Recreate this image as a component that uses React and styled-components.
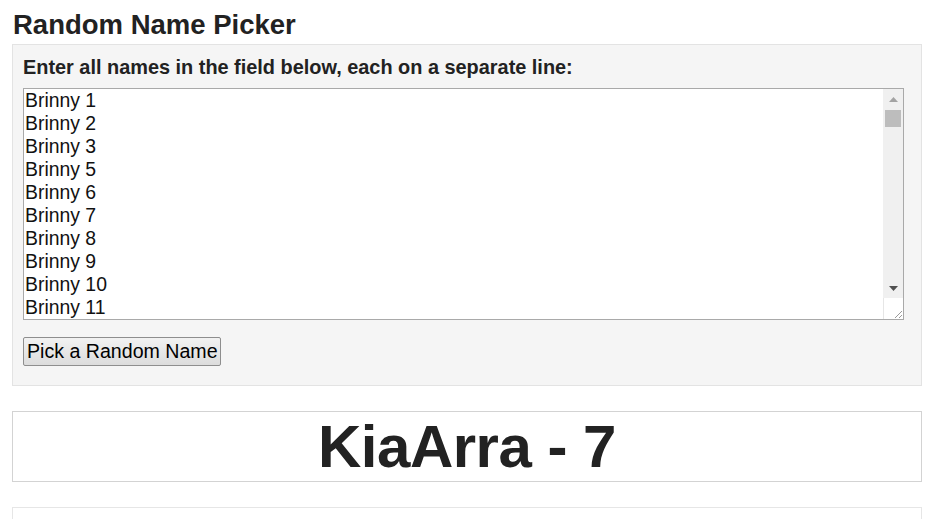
import React, { Component } from 'react';
import styled, { createGlobalStyle } from 'styled-components';

const GlobalStyle = createGlobalStyle`
  html, body {
    margin: 0;
    padding: 0;
    background: #fff;
  }
  body {
    font-family: 'Liberation Sans', Arial, sans-serif;
    color: #222;
  }
`;

const Page = styled.div`
  padding: 10px 4px 0 12px;
`;

const Heading = styled.h1`
  font-size: 27.5px;
  font-weight: bold;
  line-height: 30px;
  margin: 0 0 4px 1px;
  color: #222;
`;

const Panel = styled.div`
  background: #f5f5f5;
  border: 1px solid #e3e3e3;
  padding: 10px 10px 19px;
`;

const Label = styled.label`
  display: block;
  font-size: 19.9px;
  font-weight: bold;
  line-height: 22px;
  margin: 1px 0 10px;
  color: #222;
`;

const Field = styled.div`
  position: relative;
  width: 881px;
  height: 232px;
`;

const Names = styled.textarea`
  display: block;
  box-sizing: border-box;
  width: 100%;
  height: 100%;
  margin: 0;
  padding: 0 0 0 1px;
  border: 1px solid #a9a9a9;
  font-family: 'Liberation Sans', Arial, sans-serif;
  font-size: 19.4px;
  line-height: 23px;
  color: #111;
  background: #fff;
  resize: none;
  overflow-y: scroll;
  outline: none;
`;

/* drawn scrollbar, sits over the right edge of the textarea */
const ScrollBar = styled.div`
  position: absolute;
  top: 1px;
  right: 1px;
  bottom: 1px;
  width: 20px;
  display: flex;
  flex-direction: column;
  pointer-events: none;
`;

const Track = styled.div`
  flex: 1;
  background: #f0f0f0;
  display: flex;
  flex-direction: column;
`;

const ArrowButton = styled.div`
  height: 20px;
  display: flex;
  align-items: center;
  justify-content: center;
`;

const Thumb = styled.div`
  margin: 1px 2px 0;
  height: 17px;
  background: #bdbdbd;
`;

const Corner = styled.div`
  height: 21px;
  box-sizing: border-box;
  border-left: 1px solid #e6e6e6;
  background: #fff;
  display: flex;
  align-items: flex-end;
  justify-content: flex-end;
`;

const PickButton = styled.button`
  display: block;
  margin-top: 17px;
  height: 29px;
  padding: 0 2px 0 3px;
  font-family: 'Liberation Sans', Arial, sans-serif;
  font-size: 19.6px;
  color: #000;
  background: linear-gradient(#f2f2f2, #dcdcdc);
  border: 1px solid #8e8e8e;
  border-radius: 2px;
`;

const ResultBox = styled.div`
  margin-top: 25px;
  border: 1px solid #d3d3d3;
  height: 69px;
  display: flex;
  align-items: center;
  justify-content: center;
`;

const Winner = styled.div`
  font-size: 60px;
  font-weight: bold;
  color: #222;
  letter-spacing: -0.5px;
`;

const EmptyBox = styled.div`
  margin-top: 25px;
  border: 1px solid #e6e6e6;
  height: 60px;
`;

const names = [];
for (let i = 1; i <= 120; i += 1) {
  if (i !== 4) names.push(`Brinny ${i}`);
}

class App extends Component {
  constructor(props) {
    super(props);
    this.state = { list: names.join('\n'), winner: 'KiaArra - 7' };
  }

  render() {
    const { list, winner } = this.state;
    return (
      <Page>
        <GlobalStyle />
        <Heading>Random Name Picker</Heading>
        <Panel>
          <Label htmlFor="names">Enter all names in the field below, each on a separate line:</Label>
          <Field>
            <Names
              id="names"
              value={list}
              onChange={(e) => this.setState({ list: e.target.value })}
            />
            <ScrollBar>
              <Track>
                <ArrowButton>
                  <svg width="9" height="5" viewBox="0 0 9 5"><polygon points="0,5 9,5 4.5,0" fill="#a3a3a3" /></svg>
                </ArrowButton>
                <Thumb />
                <div style={{ flex: 1 }} />
                <ArrowButton>
                  <svg width="9" height="5" viewBox="0 0 9 5"><polygon points="0,0 9,0 4.5,5" fill="#505050" /></svg>
                </ArrowButton>
              </Track>
              <Corner>
                <svg width="10" height="10" viewBox="0 0 10 10">
                  <line x1="2" y1="9" x2="9" y2="2" stroke="#9a9a9a" strokeWidth="1" />
                  <line x1="6" y1="9" x2="9" y2="6" stroke="#9a9a9a" strokeWidth="1" />
                </svg>
              </Corner>
            </ScrollBar>
          </Field>
          <PickButton type="button">Pick a Random Name</PickButton>
        </Panel>
        <ResultBox>
          <Winner>{winner}</Winner>
        </ResultBox>
        <EmptyBox />
      </Page>
    );
  }
}

export default App;
